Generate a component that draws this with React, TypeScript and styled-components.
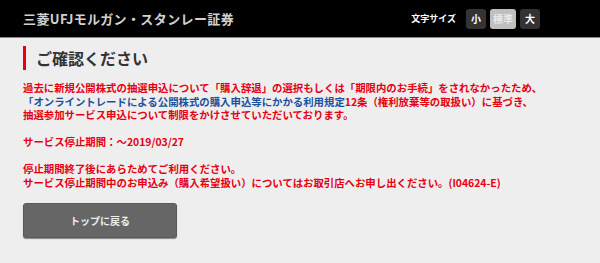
import React from "react";
import styled, { createGlobalStyle } from "styled-components";

const Global = createGlobalStyle`
  html, body { margin: 0; padding: 0; background: #eeeeee; }
  body { font-family: "Noto Sans CJK JP", "Noto Sans", sans-serif; }
  #root { min-height: 263px; }
`;

const Header = styled.header`
  height: 37px;
  background: #000;
  border-bottom: 1px solid #8a8a8a;
  display: flex;
  align-items: center;
  justify-content: space-between;
  padding: 0 60px 0 23px;
`;

const Logo = styled.div`
  color: #d2d2d2;
  font-size: 13px;
  font-weight: 700;
  letter-spacing: 0.4px;
  white-space: nowrap;
`;

const SizeControls = styled.div`
  display: flex;
  align-items: center;
  gap: 4px;
`;

const SizeLabel = styled.span`
  color: #fff;
  font-size: 9px;
  font-weight: 700;
  margin-right: 6px;
`;

const SizeButton = styled.button<{ $active?: boolean }>`
  height: 20px;
  min-width: 20px;
  padding: 0 3px;
  border: none;
  border-radius: 3px;
  background: ${(p) => (p.$active ? "#bfbfbf" : "#333333")};
  color: ${(p) => (p.$active ? "#e8e8e8" : "#ffffff")};
  font-family: inherit;
  font-size: 10px;
  font-weight: 700;
  display: flex;
  align-items: center;
  justify-content: center;
  line-height: 1;
  cursor: pointer;
`;

const Main = styled.main`
  padding: 8px 23px 0 23px;
`;

const Title = styled.h1`
  margin: 0;
  border-left: 3px solid #e60012;
  height: 24px;
  line-height: 24px;
  padding-left: 10px;
  color: #333;
  font-size: 16px;
  font-weight: 700;
`;

const Message = styled.div`
  margin-top: 11px;
  color: #e60012;
  font-size: 10.4px;
  line-height: 13.5px;
  font-weight: 700;
  white-space: nowrap;
`;

const Para = styled.p`
  margin: 0 0 13.5px 0;
  &:last-child { margin-bottom: 0; }
`;

const Link = styled.span`
  color: #1e4f9f;
`;

const BackButton = styled.button`
  margin-top: 14px;
  width: 154px;
  height: 35px;
  background: #666666;
  border: 1px solid #5a5a5a;
  border-radius: 3px;
  box-shadow: 0 1px 1px rgba(0, 0, 0, 0.45);
  color: #eeeeee;
  font-family: inherit;
  font-size: 10px;
  font-weight: 700;
  cursor: pointer;
`;

export default function App() {
  return (
    <>
      <Global />
      <Header>
        <Logo>三菱UFJモルガン・スタンレー証券</Logo>
        <SizeControls>
          <SizeLabel>文字サイズ</SizeLabel>
          <SizeButton>小</SizeButton>
          <SizeButton $active>標準</SizeButton>
          <SizeButton>大</SizeButton>
        </SizeControls>
      </Header>
      <Main>
        <Title>ご確認ください</Title>
        <Message>
          <Para>
            過去に新規公開株式の抽選申込について「購入辞退」の選択もしくは「期限内のお手続」をされなかったため、
            <br />
            <Link>「オンライントレードによる公開株式の購入申込等にかかる利用規定</Link>12条（権利放棄等の取扱い）に基づき、
            <br />
            抽選参加サービス申込について制限をかけさせていただいております。
          </Para>
          <Para>サービス停止期間：～2019/03/27</Para>
          <Para>
            停止期間終了後にあらためてご利用ください。
            <br />
            サービス停止期間中のお申込み（購入希望扱い）についてはお取引店へお申し出ください。(I04624-E)
          </Para>
        </Message>
        <BackButton>トップに戻る</BackButton>
      </Main>
    </>
  );
}
